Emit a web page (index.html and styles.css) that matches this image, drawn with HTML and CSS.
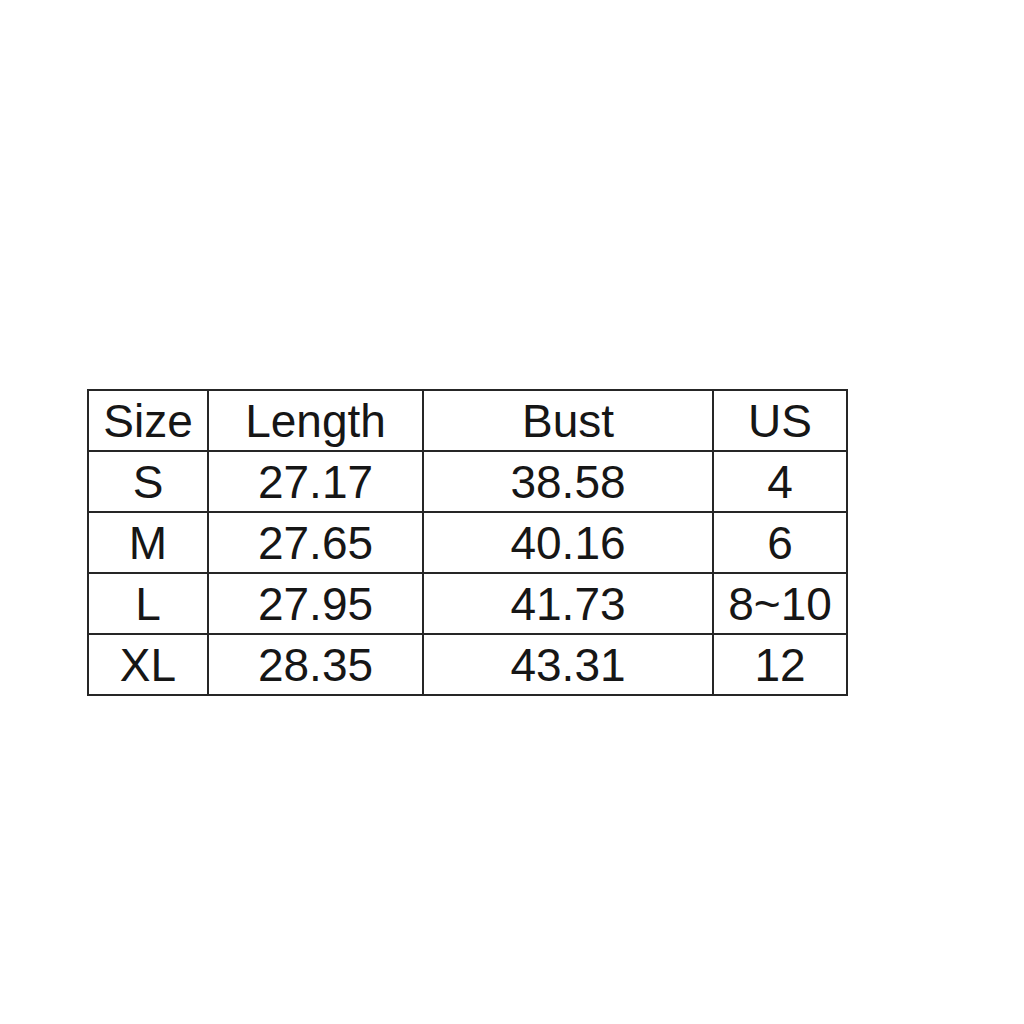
FILE: index.html
```html
<!DOCTYPE html>
<html lang="en">
<head>
<meta charset="utf-8">
<title>Size chart</title>
<link rel="stylesheet" href="styles.css">
</head>
<body>
<main class="page">
  <table class="size-table">
    <colgroup>
      <col class="c-size">
      <col class="c-length">
      <col class="c-bust">
      <col class="c-us">
    </colgroup>
    <tr><td>Size</td><td>Length</td><td>Bust</td><td>US</td></tr>
    <tr><td>S</td><td>27.17</td><td>38.58</td><td>4</td></tr>
    <tr><td>M</td><td>27.65</td><td>40.16</td><td>6</td></tr>
    <tr><td>L</td><td>27.95</td><td>41.73</td><td>8~10</td></tr>
    <tr><td>XL</td><td>28.35</td><td>43.31</td><td>12</td></tr>
  </table>
</main>
</body>
</html>
```
FILE: styles.css
```css
html, body {
  margin: 0;
  padding: 0;
  background: #ffffff;
}
.page {
  padding: 389px 0 0 87px;
}
.size-table {
  border-collapse: collapse;
  table-layout: fixed;
  width: 759px;
  font-family: "Liberation Sans", Arial, sans-serif;
  font-size: 46px;
  color: #161616;
}
.c-size { width: 120px; }
.c-length { width: 215px; }
.c-bust { width: 290px; }
.c-us { width: 134px; }
.size-table td {
  border: 2px solid #262626;
  text-align: center;
  height: 59px;
  padding: 0;
  line-height: 1;
  vertical-align: middle;
}
```
